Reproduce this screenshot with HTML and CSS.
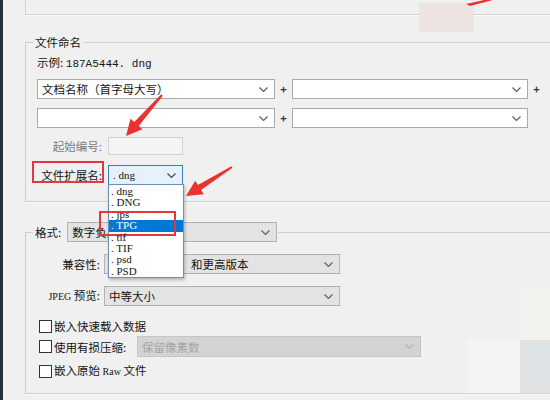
FILE: index.html
```html
<!DOCTYPE html>
<html lang="zh-CN">
<head>
    <meta charset="UTF-8">
    <title>文件命名</title>
    <link rel="stylesheet" href="styles.css">
</head>
<body>
    <div class="window">
        <div class="group-prev"></div>

        <fieldset class="group naming">
            <legend>文件命名</legend>
            <div class="example">示例: <span class="mono">187A5444. dng</span></div>

            <div class="name-row">
                <div class="combo name-a"><span>文档名称（首字母大写）</span><svg class="chev" width="9" height="5" viewBox="0 0 9 5"><path d="M0.5 0.5 L4.5 4.5 L8.5 0.5"/></svg></div>
                <span class="plus">+</span>
                <div class="combo name-b"><span></span><svg class="chev" width="9" height="5" viewBox="0 0 9 5"><path d="M0.5 0.5 L4.5 4.5 L8.5 0.5"/></svg></div>
                <span class="plus">+</span>
            </div>
            <div class="name-row gap">
                <div class="combo name-a"><span></span><svg class="chev" width="9" height="5" viewBox="0 0 9 5"><path d="M0.5 0.5 L4.5 4.5 L8.5 0.5"/></svg></div>
                <span class="plus">+</span>
                <div class="combo name-b"><span></span><svg class="chev" width="9" height="5" viewBox="0 0 9 5"><path d="M0.5 0.5 L4.5 4.5 L8.5 0.5"/></svg></div>
            </div>

            <div class="field-row start">
                <span class="field-label muted">起始编号:</span>
                <div class="textbox"></div>
            </div>
            <div class="field-row ext">
                <span class="field-label marked">文件扩展名:</span>
                <div class="combo ext-combo">
                    <span class="serif">. dng</span><svg class="chev" width="9" height="5" viewBox="0 0 9 5"><path d="M0.5 0.5 L4.5 4.5 L8.5 0.5"/></svg>
                    <ul class="dropdown">
                        <li>. dng</li>
                        <li>. DNG</li>
                        <li>. jps</li>
                        <li class="active marked">. TPG</li>
                        <li>. tif</li>
                        <li>. TIF</li>
                        <li>. psd</li>
                        <li>. PSD</li>
                    </ul>
                </div>
            </div>
        </fieldset>

        <fieldset class="group format">
            <legend>
                <span>格式:</span>
                <div class="combo gray fmt-combo"><span>数字负片</span><svg class="chev" width="9" height="5" viewBox="0 0 9 5"><path d="M0.5 0.5 L4.5 4.5 L8.5 0.5"/></svg></div>
            </legend>

            <div class="opt-row">
                <span class="opt-label">兼容性:</span>
                <div class="combo gray opt-combo compat"><span>和更高版本</span><svg class="chev" width="9" height="5" viewBox="0 0 9 5"><path d="M0.5 0.5 L4.5 4.5 L8.5 0.5"/></svg></div>
            </div>
            <div class="opt-row gap">
                <span class="opt-label"><span class="serif small">JPEG</span> 预览:</span>
                <div class="combo gray opt-combo"><span>中等大小</span><svg class="chev" width="9" height="5" viewBox="0 0 9 5"><path d="M0.5 0.5 L4.5 4.5 L8.5 0.5"/></svg></div>
            </div>

            <div class="check-row first">
                <span class="box"></span><span>嵌入快速载入数据</span>
            </div>
            <div class="check-row second">
                <span class="box"></span><span class="check-label">使用有损压缩:</span>
                <div class="combo disabled lossy-combo"><span>保留像素数</span><svg class="chev" width="9" height="5" viewBox="0 0 9 5"><path d="M0.5 0.5 L4.5 4.5 L8.5 0.5"/></svg></div>
            </div>
            <div class="check-row third">
                <span class="box"></span><span>嵌入原始 <span class="serif small">Raw</span> 文件</span>
            </div>
        </fieldset>
    </div>

    <!-- leftovers from the cropped screenshot -->
    <div class="patch pink"></div>
    <div class="patch warm"></div>
    <div class="patch cool"></div>
    <div class="patch pale"></div>

    <!-- annotation arrows -->
    <svg class="arrows" width="550" height="400" viewBox="0 0 550 400">
        <polygon points="162.8,95.7 138.8,126 142.5,129.3 126,136 130.5,118.7 134.3,122 161.2,94.3"/>
        <polygon points="232.5,167.8 201.1,190 203.8,194.3 186,196 195.2,180.7 197.9,185 231.5,166.2"/>
        <polygon points="466,4 470,6 493,0 484,0"/>
    </svg>
</body>
</html>
```

FILE: styles.css
```css
* {
    box-sizing: border-box;
}

body {
    margin: 0;
    width: 550px;
    height: 400px;
    overflow: hidden;
    position: relative;
    background: #f0f0f0;
    color: #141414;
    font-family: "Noto Sans CJK SC", sans-serif;
    font-size: 11.5px;
}

.window {
    height: 400px;
    border-left: 3px solid #22303d;
    padding-left: 22px;
}

.group-prev {
    height: 15px;
    margin-right: -20px;
    border-left: 1px solid #d2d2d2;
    border-bottom: 1px solid #d2d2d2;
    box-shadow: 0 1px 0 #fafafa;
}

.group {
    margin: 19px -20px 0 0;
    padding: 4px 0 16px 11px;
    border: 1px solid #cfcfcf;
    box-shadow: 0 1px 0 #fafafa;
}

.group legend {
    margin-left: -4px;
    padding: 0 2px;
    line-height: 16px;
}

.mono {
    font-family: "Liberation Mono", monospace;
    font-size: 11px;
}

.serif {
    font-family: "Liberation Serif", serif;
    font-size: 11px;
}

.serif.small {
    font-size: 10px;
}

.example {
    line-height: 16px;
}

/* combo boxes */
.combo {
    display: flex;
    align-items: center;
    justify-content: space-between;
    height: 20px;
    padding: 0 6px 0 4px;
    background: #fff;
    border: 1px solid #a9a9a9;
    white-space: nowrap;
    line-height: 18px;
}

.combo .chev {
    flex: none;
    fill: none;
    stroke: #606060;
    stroke-width: 1.2;
}

.combo.gray {
    background: #e3e3e3;
    border-color: #b4b4b4;
}

.combo.disabled {
    background: #d3d3d3;
    border-color: #c6c6c6;
    color: #a4a4a4;
}

.combo.disabled .chev {
    stroke: #b5b5b5;
}

.name-row {
    display: flex;
    align-items: center;
    margin-top: 7px;
}

.name-row.gap {
    margin-top: 9px;
}

.name-a {
    width: 238px;
}

.name-b {
    width: 236px;
}

.plus {
    width: 17px;
    text-align: center;
    font-weight: bold;
    font-size: 11px;
    color: #333;
}

.field-row {
    display: flex;
    align-items: center;
}

.field-row.start {
    margin-top: 9px;
}

.field-row.ext {
    margin-top: 10px;
}

.field-label {
    width: 65px;
    text-align: right;
    line-height: 18px;
}

.muted {
    color: #7a7a7a;
}

.textbox {
    width: 75px;
    height: 18px;
    margin-left: 6px;
    background: #f4f4f4;
    border: 1px solid #d2d2d2;
}

.ext-combo {
    position: relative;
    width: 75px;
    margin-left: 6px;
    background: #e5f1fb;
    border-color: #3d7ab8;
}

.ext-combo .chev {
    stroke: #4a4a4a;
}

.dropdown {
    position: absolute;
    top: 18px;
    left: -1px;
    z-index: 3;
    width: 76px;
    margin: 0;
    padding: 1px 0 0;
    list-style: none;
    background: #fff;
    border: 1px solid #6d8fb5;
    box-shadow: 1px 2px 3px rgba(0, 0, 0, 0.25);
    font-family: "Liberation Serif", serif;
    font-size: 11px;
}

.dropdown li {
    position: relative;
    height: 11.4px;
    line-height: 11.4px;
    padding-left: 2px;
}

.dropdown li.active {
    background: #0078d7;
    color: #fff;
}

/* red annotation boxes */
.marked {
    position: relative;
}

.marked::after {
    content: '';
    position: absolute;
    top: -5px;
    bottom: 1px;
    left: -5px;
    right: -2px;
    border: 2px solid #e0393e;
}

.dropdown li.marked::after {
    top: -9px;
    bottom: -4px;
    left: -10px;
    right: 7px;
}

/* format group */
.format {
    margin-top: 20px;
    padding: 12px 0 13px 11px;
}

.format legend {
    display: flex;
    align-items: center;
    padding: 0 1px 0 2px;
    line-height: 20px;
}

.fmt-combo {
    width: 210px;
    margin-left: 6px;
}

.opt-row {
    display: flex;
    align-items: center;
}

.opt-row.gap {
    margin-top: 11px;
}

.opt-label {
    width: 63px;
    text-align: right;
    line-height: 20px;
    white-space: nowrap;
}

.opt-combo {
    width: 236px;
    margin-left: 4px;
}

.opt-combo.compat {
    padding-left: 86px;
}

.check-row {
    display: flex;
    align-items: center;
    line-height: 16px;
}

.check-row.first {
    margin-top: 11px;
}

.check-row.second {
    margin-top: 2px;
}

.check-row.third {
    margin-top: 5px;
}

.box {
    width: 13px;
    height: 13px;
    margin: 0 2px 0 2px;
    background: #fff;
    border: 1px solid #333;
}

.check-label {
    width: 83px;
}

.lossy-combo {
    width: 284px;
    height: 21px;
}

/* overlays */
.patch {
    position: absolute;
}

.patch.pink {
    left: 419px;
    top: 3px;
    width: 55px;
    height: 29px;
    background: #eee3e3;
}

.patch.warm {
    left: 520px;
    top: 288px;
    width: 30px;
    height: 52px;
    background: #f4f2ef;
}

.patch.cool {
    left: 520px;
    top: 340px;
    width: 30px;
    height: 53px;
    background: #dfe3e5;
}

.patch.pale {
    left: 467px;
    top: 340px;
    width: 53px;
    height: 53px;
    background: #f4f4f4;
}

.arrows {
    position: absolute;
    left: 0;
    top: 0;
    z-index: 5;
    pointer-events: none;
    fill: #e8322f;
}
```
